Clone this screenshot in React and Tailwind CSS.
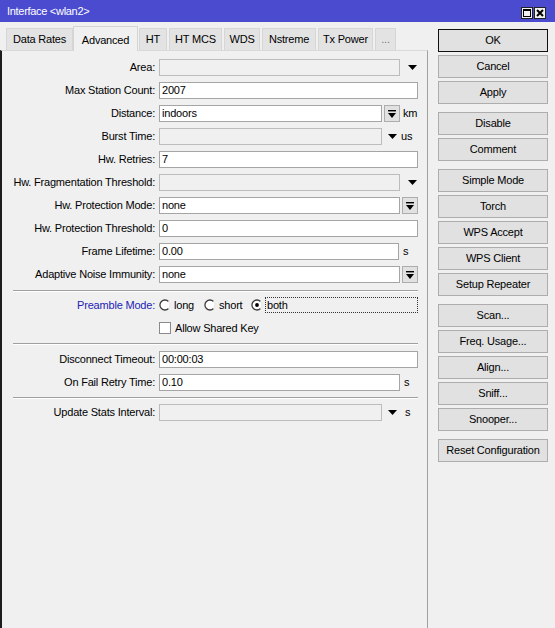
import React from "react";

const FONT = "font-['Liberation_Sans',Arial,sans-serif]";

function DropArrow() {
  return (
    <svg width="9" height="5" viewBox="0 0 9 5" className="block">
      <polygon points="0,0 9,0 4.5,5" fill="#000" />
    </svg>
  );
}

function BoxButton({ className = "" }) {
  return (
    <div
      className={`h-[17px] w-[16px] shrink-0 border border-[#adadad] bg-[#e1e1e1] flex items-center justify-center ${className}`}
    >
      <svg width="8" height="8" viewBox="0 0 8 8" className="block">
        <rect x="0" y="0" width="8" height="1.4" fill="#000" />
        <polygon points="0,3 8,3 4,8" fill="#000" />
      </svg>
    </div>
  );
}

function Input({ value, disabled, className = "" }) {
  return (
    <div
      className={`h-[17px] shrink-0 border pl-[2px] leading-[15px] whitespace-nowrap ${
        disabled ? "bg-[#f0f0f0] border-[#bcbcbc]" : "bg-white border-[#a5a5a5]"
      } ${className}`}
    >
      {value}
    </div>
  );
}

function Label({ children, blue }) {
  return (
    <div
      className={`w-[153px] shrink-0 text-right mr-[4px] whitespace-nowrap ${
        blue ? "text-[#2323b4]" : "text-black"
      }`}
    >
      {children}:
    </div>
  );
}

function Row({ label, children, className = "" }) {
  return (
    <div className={`flex items-center h-[17px] ${className}`}>
      <Label>{label}</Label>
      {children}
    </div>
  );
}

function Separator({ className = "" }) {
  return (
    <div className={`ml-[11px] w-[405px] border-t border-t-[#a0a0a0] border-b border-b-white ${className}`} />
  );
}

function Radio({ checked }) {
  return (
    <svg width="12" height="12" viewBox="0 0 12 12" className="block shrink-0">
      <circle cx="6" cy="6" r="5" fill="#fff" />
      <path d="M9.5 2.5 A5 5 0 1 0 9.5 9.5" fill="none" stroke="#3c3c3c" strokeWidth="1.3" />
      <path d="M9.5 2.5 A5 5 0 0 1 9.5 9.5" fill="none" stroke="#e6e6e6" strokeWidth="1" />
      {checked && <circle cx="6" cy="6" r="1.9" fill="#000" />}
    </svg>
  );
}

function Btn({ children, primary }) {
  return (
    <div
      className={`h-[23px] w-[110px] flex items-center justify-center bg-[#e1e1e1] border ${
        primary ? "border-[#111]" : "border-[#adadad]"
      }`}
    >
      {children}
    </div>
  );
}

const tabs = [
  { name: "Data Rates", w: "w-[67px]" },
  { name: "Advanced", w: "w-[65px]", active: true },
  { name: "HT", w: "w-[28px] ml-[1px]" },
  { name: "HT MCS", w: "w-[53px] ml-[2px]" },
  { name: "WDS", w: "w-[36px] ml-[2px]" },
  { name: "Nstreme", w: "w-[54px] ml-[2px]" },
  { name: "Tx Power", w: "w-[55px] ml-[2px]" },
  { name: "...", w: "w-[21px] ml-[2px]" },
];

const buttonGroups = [
  ["OK", "Cancel", "Apply"],
  ["Disable", "Comment"],
  ["Simple Mode", "Torch", "WPS Accept", "WPS Client", "Setup Repeater"],
  ["Scan...", "Freq. Usage...", "Align...", "Sniff...", "Snooper..."],
  ["Reset Configuration"],
];

export default function App() {
  return (
    <div
      className={`w-[555px] h-[628px] bg-[#f0f0f0] flex flex-col overflow-hidden text-[11px] tracking-[-0.2px] text-black ${FONT}`}
    >
      {/* title bar */}
      <div className="h-[22px] shrink-0 bg-[#4b4bd0] flex items-center pl-[7px] pr-[9px]">
        <span className="text-white tracking-[-0.3px]">Interface &lt;wlan2&gt;</span>
        <div className="ml-auto flex gap-[1px] mt-[3px]">
          <div className="w-[12px] h-[12px] bg-[#f0f0f0] border border-[#222] flex items-center justify-center">
            <div className="w-[8px] h-[8px] border border-black border-t-2" />
          </div>
          <div className="w-[12px] h-[12px] bg-[#f0f0f0] border border-[#222] flex items-center justify-center">
            <svg width="8" height="8" viewBox="0 0 8 8" className="block">
              <path d="M1 1 L7 7 M7 1 L1 7" stroke="#000" strokeWidth="2" />
            </svg>
          </div>
        </div>
      </div>

      <div className="flex flex-1 min-h-0">
        {/* tabs + page */}
        <div className="w-[428px] shrink-0 flex flex-col">
          <div className="h-[28px] shrink-0 pt-[3px] pl-[6px] flex items-end">
            {tabs.map((t) =>
              t.active ? (
                <div
                  key={t.name}
                  className={`${t.w} h-[25px] -mb-px relative z-10 bg-[#f0f0f0] border border-[#d4d4d4] border-b-0 flex items-start justify-center pt-[5px]`}
                >
                  {t.name}
                </div>
              ) : (
                <div
                  key={t.name}
                  className={`${t.w} h-[22px] bg-[#e3e3e3] border border-[#d6d6d6] border-b-0 flex items-center justify-center ${
                    t.name === "..." ? "text-[#777]" : ""
                  }`}
                >
                  {t.name}
                </div>
              )
            )}
          </div>

          <div className="flex-1 border-t border-t-[#d9d9d9] border-l-2 border-l-[#1c1c1c] border-r border-r-[#a0a0a0] flex flex-col pt-[8px]">
            <div className="flex flex-col gap-[6px]">
              <Row label="Area">
                <Input disabled className="w-[241px]" />
                <div className="ml-[8px]"><DropArrow /></div>
              </Row>
              <Row label="Max Station Count">
                <Input value="2007" className="w-[259px]" />
              </Row>
              <Row label="Distance">
                <Input value="indoors" className="w-[223px]" />
                <BoxButton className="ml-[2px]" />
                <span className="ml-[3px]">km</span>
              </Row>
              <Row label="Burst Time">
                <Input disabled className="w-[223px]" />
                <div className="ml-[6px]"><DropArrow /></div>
                <span className="ml-[4px]">us</span>
              </Row>
              <Row label="Hw. Retries">
                <Input value="7" className="w-[259px]" />
              </Row>
              <Row label="Hw. Fragmentation Threshold">
                <Input disabled className="w-[241px]" />
                <div className="ml-[8px]"><DropArrow /></div>
              </Row>
              <Row label="Hw. Protection Mode">
                <Input value="none" className="w-[241px]" />
                <BoxButton className="ml-[2px]" />
              </Row>
              <Row label="Hw. Protection Threshold">
                <Input value="0" className="w-[259px]" />
              </Row>
              <Row label="Frame Lifetime">
                <Input value="0.00" className="w-[240px]" />
                <span className="ml-[4px]">s</span>
              </Row>
              <Row label="Adaptive Noise Immunity">
                <Input value="none" className="w-[241px]" />
                <BoxButton className="ml-[2px]" />
              </Row>
            </div>

            <Separator className="mt-[7px]" />

            <div className="flex items-center h-[16px] mt-[5px]">
              <Label blue>Preamble Mode</Label>
              <Radio />
              <span className="ml-[3px] w-[20px]">long</span>
              <div className="ml-[10px]"><Radio /></div>
              <span className="ml-[3px] w-[22px]">short</span>
              <div className="ml-[10px]"><Radio checked /></div>
              <div className="ml-[2px] w-[153px] h-[16px] border border-dotted border-[#333] pl-[1px] leading-[14px]">
                both
              </div>
            </div>

            <div className="flex items-center h-[16px] mt-[7px]">
              <div className="w-[157px] shrink-0" />
              <div className="w-[12px] h-[12px] bg-white border border-[#8a8a8a] shrink-0" />
              <span className="ml-[4px]">Allow Shared Key</span>
            </div>

            <Separator className="mt-[7px]" />

            <Row label="Disconnect Timeout" className="mt-[6px]">
              <Input value="00:00:03" className="w-[259px]" />
            </Row>
            <Row label="On Fail Retry Time" className="mt-[6px]">
              <Input value="0.10" className="w-[241px]" />
              <span className="ml-[4px]">s</span>
            </Row>

            <Separator className="mt-[6px]" />

            <Row label="Update Stats Interval" className="mt-[5px]">
              <Input disabled className="w-[223px]" />
              <div className="ml-[6px]"><DropArrow /></div>
              <span className="ml-[8px]">s</span>
            </Row>
          </div>
        </div>

        {/* action buttons */}
        <div className="flex-1 pl-[10px] pt-[7px] flex flex-col gap-[8px]">
          {buttonGroups.map((g, i) => (
            <div key={i} className="flex flex-col gap-[3px]">
              {g.map((b) => (
                <Btn key={b} primary={b === "OK"}>
                  {b}
                </Btn>
              ))}
            </div>
          ))}
        </div>
      </div>
    </div>
  );
}
